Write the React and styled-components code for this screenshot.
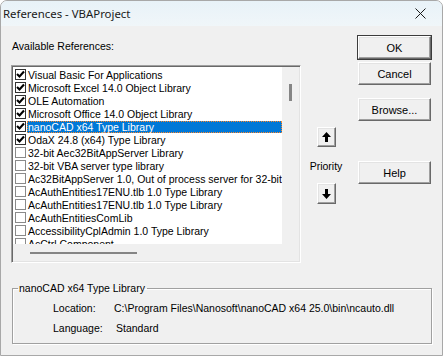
import React from "react";
import styled, { createGlobalStyle } from "styled-components";

const GlobalStyle = createGlobalStyle`
  html, body {
    margin: 0;
    padding: 0;
    background: #ffffff;
  }
`;

const ui = `"Liberation Sans", Arial, sans-serif`;

// Window frame
const Window = styled.div`
  width: 443px;
  height: 356px;
  box-sizing: border-box;
  display: flex;
  flex-direction: column;
  background: #f0f0f0;
  border: 1px solid #a8a8a8;
  border-radius: 7px 7px 0 0;
  overflow: hidden;
  font-family: ${ui};
  font-size: 10.5px;
  color: #000;
`;

const TitleBar = styled.div`
  height: 25px;
  flex: none;
  display: flex;
  align-items: center;
  justify-content: space-between;
  padding: 0 0 0 2px;
  background: linear-gradient(#e8f2f8, #f0f6f9);
  font-family: "Noto Sans", "Open Sans", sans-serif;
  font-size: 11.4px;
  color: #1a1a1a;
`;

const CloseBox = styled.div`
  width: 44px;
  height: 25px;
  display: flex;
  align-items: center;
  justify-content: center;
`;

const Body = styled.div`
  flex: 1;
  display: flex;
  flex-direction: column;
  padding: 10px 0 0 10px;
`;

const TopArea = styled.div`
  display: flex;
  align-items: flex-start;
`;

const LeftColumn = styled.div`
  display: flex;
  flex-direction: column;
  width: 290px;
`;

const Label = styled.div`
  line-height: 13px;
  margin: 4px 0 12px 1px;
`;

// List box with scrollbars
const ListBox = styled.div`
  box-sizing: border-box;
  width: 290px;
  height: 198px;
  display: grid;
  grid-template-columns: 1fr 17px;
  grid-template-rows: 1fr 17px;
  border-top: 1px solid #a0a0a0;
  border-left: 1px solid #a0a0a0;
  border-right: 1px solid #ffffff;
  border-bottom: 1px solid #ffffff;
  box-shadow: inset 1px 1px 0 #696969, inset -1px -1px 0 #e3e3e3;
  padding: 1px;
  background: #f0f0f0;
`;

const Items = styled.div`
  background: #ffffff;
  overflow: hidden;
  padding-top: 1px;
`;

const Row = styled.div`
  height: 13px;
  display: flex;
  align-items: center;
  white-space: nowrap;
  padding-left: 2px;
`;

const Box = styled.div`
  box-sizing: border-box;
  width: 11px;
  height: 11px;
  flex: none;
  border: 1px solid ${(p) => (p.$checked ? "#333333" : "#8a8a8a")};
  background: #ffffff;
  display: flex;
  align-items: center;
  justify-content: center;
  margin-right: 1px;
`;

const ItemText = styled.span`
  height: 12px;
  line-height: 12px;
  padding: 0 1px;
  box-sizing: border-box;
  flex: 1;
  color: ${(p) => (p.$selected ? "#ffffff" : "#000000")};
  background: ${(p) => (p.$selected ? "#0078d7" : "transparent")};
  outline: ${(p) => (p.$selected ? "1px dotted #ff8728" : "none")};
  outline-offset: -1px;
`;

const VScroll = styled.div`
  background: #f0f0f0;
`;

const VThumb = styled.div`
  margin: 17px 0 0 7px;
  width: 3px;
  height: 17px;
  background: #858585;
`;

const HScroll = styled.div`
  background: #f0f0f0;
  padding-top: 8px;
`;

const HThumb = styled.div`
  margin-left: 17px;
  width: 107px;
  height: 2px;
  background: #858585;
`;

const Corner = styled.div`
  background: #f0f0f0;
`;

// Priority column
const PriorityColumn = styled.div`
  width: 34px;
  margin-left: 8px;
  padding-top: 91px;
  display: flex;
  flex-direction: column;
  align-items: center;
`;

const PriorityText = styled.div`
  line-height: 13px;
  margin: 13px 0 10px;
`;

// Buttons
const ButtonColumn = styled.div`
  display: flex;
  flex-direction: column;
  margin-left: 15px;
`;

const Button = styled.button`
  box-sizing: border-box;
  width: ${(p) => p.$w || 73}px;
  height: ${(p) => p.$h || 23}px;
  margin-top: ${(p) => p.$top || 0}px;
  padding: 0;
  font-family: ${ui};
  font-size: 11px;
  color: #000;
  background: #f0f0f0;
  border: 1px solid;
  border-color: #ffffff #696969 #696969 #ffffff;
  box-shadow: ${(p) =>
    p.$default
      ? "0 0 0 1px #3c3c3c, inset -1px -1px 0 #a0a0a0, inset 1px 1px 0 #e3e3e3"
      : "inset -1px -1px 0 #a0a0a0, inset 1px 1px 0 #e3e3e3"};
  display: flex;
  align-items: center;
  justify-content: center;
`;

// Group box at the bottom
const Group = styled.fieldset`
  margin: 19px 0 0 1px;
  width: 420px;
  height: 62px;
  box-sizing: border-box;
  padding: 7px 0 0 0;
  border: 1px solid #a0a0a0;
  box-shadow: 1px 1px 0 #ffffff, inset 1px 1px 0 #ffffff;
`;

const Legend = styled.legend`
  margin-left: 5px;
  padding: 0 2px 0 1px;
  line-height: 13px;
`;

const InfoGrid = styled.div`
  display: grid;
  grid-template-columns: 61px auto;
  row-gap: 7px;
  line-height: 13px;
  padding-left: 40px;
`;

const InfoValue = styled.div`
  padding-left: ${(p) => p.$indent || 0}px;
  white-space: nowrap;
`;

const items = [
  ["Visual Basic For Applications", true],
  ["Microsoft Excel 14.0 Object Library", true],
  ["OLE Automation", true],
  ["Microsoft Office 14.0 Object Library", true],
  ["nanoCAD x64 Type Library", true, true],
  ["OdaX 24.8 (x64) Type Library", true],
  ["32-bit Aec32BitAppServer Library", false],
  ["32-bit VBA server type library", false],
  ["Ac32BitAppServer 1.0, Out of process server for 32-bit applications", false],
  ["AcAuthEntities17ENU.tlb 1.0 Type Library", false],
  ["AcAuthEntities17ENU.tlb 1.0 Type Library", false],
  ["AcAuthEntitiesComLib", false],
  ["AccessibilityCplAdmin 1.0 Type Library", false],
  ["AcCtrl Component", false],
];

const Check = () => (
  <svg width="9" height="9" viewBox="0 0 9 9">
    <path d="M1 4 L3.5 6.5 L8 1.5" fill="none" stroke="#000" strokeWidth="2.1" />
  </svg>
);

const Arrow = ({ down }) => (
  <svg width="9" height="10" viewBox="0 0 9 10" style={down ? { transform: "rotate(180deg)" } : undefined}>
    <path d="M4.5 0 L9 5 L6 5 L6 10 L3 10 L3 5 L0 5 Z" fill="#000" />
  </svg>
);

export default function App() {
  return (
    <>
      <GlobalStyle />
      <Window>
        <TitleBar>
          <span>References - VBAProject</span>
          <CloseBox>
            <svg width="11" height="11" viewBox="0 0 11 11">
              <path d="M0.5 0.5 L10.5 10.5 M10.5 0.5 L0.5 10.5" stroke="#1a1a1a" strokeWidth="1" />
            </svg>
          </CloseBox>
        </TitleBar>
        <Body>
          <TopArea>
            <LeftColumn>
              <Label>Available References:</Label>
              <ListBox>
                <Items>
                  {items.map(([name, checked, selected], i) => (
                    <Row key={i}>
                      <Box $checked={checked}>{checked && <Check />}</Box>
                      <ItemText $selected={selected}>{name}</ItemText>
                    </Row>
                  ))}
                </Items>
                <VScroll>
                  <VThumb />
                </VScroll>
                <HScroll>
                  <HThumb />
                </HScroll>
                <Corner />
              </ListBox>
            </LeftColumn>
            <PriorityColumn>
              <Button $w={19} $h={20}>
                <Arrow />
              </Button>
              <PriorityText>Priority</PriorityText>
              <Button $w={19} $h={21}>
                <Arrow down />
              </Button>
            </PriorityColumn>
            <ButtonColumn>
              <Button $default>OK</Button>
              <Button $top={3}>Cancel</Button>
              <Button $top={13}>Browse...</Button>
              <Button $top={40}>Help</Button>
            </ButtonColumn>
          </TopArea>
          <Group>
            <Legend>nanoCAD x64 Type Library</Legend>
            <InfoGrid>
              <div>Location:</div>
              <InfoValue>C:\Program Files\Nanosoft\nanoCAD x64 25.0\bin\ncauto.dll</InfoValue>
              <div>Language:</div>
              <InfoValue $indent={2}>Standard</InfoValue>
            </InfoGrid>
          </Group>
        </Body>
      </Window>
    </>
  );
}
